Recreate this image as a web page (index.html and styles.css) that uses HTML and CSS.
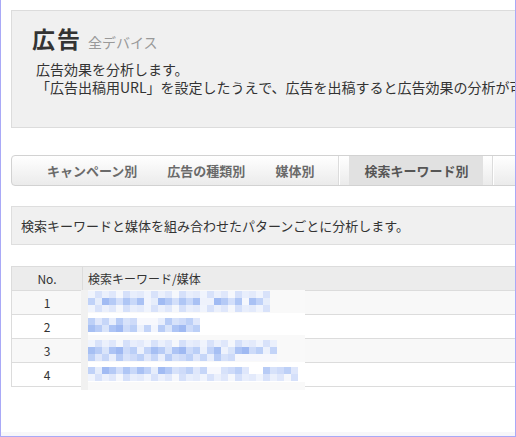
FILE: index.html
```html
<!DOCTYPE html>
<html lang="ja">
<head>
<meta charset="utf-8">
<title>広告</title>
<link rel="stylesheet" href="styles.css">
</head>
<body>
<div class="frame">
  <div class="page">
    <section class="page-head">
      <h1 class="title">広告<span class="sub">全デバイス</span></h1>
      <p class="lead">広告効果を分析します。<br>「広告出稿用URL」を設定したうえで、広告を出稿すると広告効果の分析が可能になります。</p>
    </section>

    <nav class="tabs">
      <a class="tab">キャンペーン別</a>
      <a class="tab">広告の種類別</a>
      <a class="tab">媒体別</a>
      <span class="sep"></span>
      <a class="tab active">検索キーワード別</a>
      <span class="sep"></span>
    </nav>

    <div class="note">検索キーワードと媒体を組み合わせたパターンごとに分析します。</div>

    <div class="table-wrap">
      <table class="report">
        <thead>
          <tr><th class="no">No.</th><th class="kw">検索キーワード/媒体</th></tr>
        </thead>
        <tbody>
          <tr><td class="no">1</td><td></td></tr>
          <tr><td class="no">2</td><td></td></tr>
          <tr><td class="no">3</td><td></td></tr>
          <tr><td class="no">4</td><td></td></tr>
        </tbody>
      </table>
      <svg class="mosaic" width="224" height="100" viewBox="0 0 224 100" aria-hidden="true">
        <defs>
          <pattern id="pb" width="56" height="7" patternUnits="userSpaceOnUse">
            <rect x="0" width="7" height="7" fill="#a9c1f4"/>
            <rect x="7" width="7" height="7" fill="#c0d2f8"/>
            <rect x="14" width="7" height="7" fill="#e6edfb"/>
            <rect x="21" width="7" height="7" fill="#a1bbf3"/>
            <rect x="28" width="7" height="7" fill="#b5caf6"/>
            <rect x="35" width="7" height="7" fill="#d3dffa"/>
            <rect x="42" width="7" height="7" fill="#afc6f5"/>
            <rect x="49" width="7" height="7" fill="#c8d8f9"/>
          </pattern>
          <pattern id="pb2" width="63" height="7" patternUnits="userSpaceOnUse">
            <rect x="0" width="7" height="7" fill="#c3d4f8"/>
            <rect x="7" width="7" height="7" fill="#a6bff3"/>
            <rect x="14" width="7" height="7" fill="#b8ccf6"/>
            <rect x="21" width="7" height="7" fill="#d9e4fa"/>
            <rect x="28" width="7" height="7" fill="#adc4f5"/>
            <rect x="35" width="7" height="7" fill="#9fb9f2"/>
            <rect x="42" width="7" height="7" fill="#cddbf9"/>
            <rect x="49" width="7" height="7" fill="#bbcff7"/>
            <rect x="56" width="7" height="7" fill="#ecf1fc"/>
          </pattern>
          <pattern id="pl" width="56" height="7" patternUnits="userSpaceOnUse">
            <rect x="0" width="7" height="7" fill="#e3eafb"/>
            <rect x="7" width="7" height="7" fill="#f0f4fd"/>
            <rect x="14" width="7" height="7" fill="#d8e2fa"/>
            <rect x="21" width="7" height="7" fill="#ebf0fc"/>
            <rect x="28" width="7" height="7" fill="#dfe7fb"/>
            <rect x="35" width="7" height="7" fill="#f5f7fc"/>
            <rect x="42" width="7" height="7" fill="#d5e0fa"/>
            <rect x="49" width="7" height="7" fill="#e8eefc"/>
          </pattern>
          <pattern id="pm" width="49" height="7" patternUnits="userSpaceOnUse">
            <rect x="0" width="7" height="7" fill="#cedbf9"/>
            <rect x="7" width="7" height="7" fill="#bdd0f7"/>
            <rect x="14" width="7" height="7" fill="#dfe7fb"/>
            <rect x="21" width="7" height="7" fill="#c6d6f8"/>
            <rect x="28" width="7" height="7" fill="#e8eefc"/>
            <rect x="35" width="7" height="7" fill="#b8ccf6"/>
            <rect x="42" width="7" height="7" fill="#d7e2fa"/>
          </pattern>
        </defs>
        <rect width="224" height="100" fill="#f9f9f9"/>
        <rect width="7" height="100" fill="#f1f1f1"/>
        <rect x="7" y="23" width="217" height="22" fill="#ffffff"/>
        <rect x="7" y="72" width="217" height="20" fill="#ffffff"/>

        <!-- row 1 -->
        <rect x="7" y="1" width="182" height="7" fill="url(#pl)"/>
        <rect x="7" y="8" width="182" height="7" fill="url(#pb)"/>
        <rect x="7" y="15" width="182" height="7" fill="url(#pl)"/>
        <rect x="63" y="8" width="7" height="7" fill="#f1f4fd"/>
        <rect x="119" y="8" width="14" height="7" fill="#eef2fc"/>
        <rect x="161" y="8" width="7" height="7" fill="#f5f7fd"/>

        <!-- row 2 -->
        <rect x="7" y="28" width="112" height="7" fill="url(#pm)"/>
        <rect x="7" y="35" width="112" height="7" fill="url(#pb2)"/>
        <rect x="56" y="28" width="21" height="7" fill="#f7f8fd"/>
        <rect x="70" y="35" width="7" height="7" fill="#f2f5fd"/>

        <!-- row 3 -->
        <rect x="7" y="50" width="189" height="7" fill="url(#pl)"/>
        <rect x="7" y="57" width="189" height="7" fill="url(#pb2)"/>
        <rect x="7" y="64" width="189" height="7" fill="url(#pm)"/>
        <rect x="140" y="57" width="7" height="7" fill="#eef2fc"/>
        <rect x="154" y="64" width="42" height="7" fill="#f6f7fc"/>

        <!-- row 4 -->
        <rect x="7" y="77" width="210" height="7" fill="url(#pm)"/>
        <rect x="7" y="84" width="210" height="7" fill="url(#pl)"/>
        <rect x="7" y="77" width="84" height="7" fill="url(#pb)"/>
        <rect x="126" y="77" width="14" height="7" fill="#f7f8fd"/>
        <rect x="168" y="77" width="14" height="7" fill="#ffffff"/>
      </svg>
    </div>
  </div>
  <div class="hscroll"></div>
</div>
</body>
</html>
```

FILE: styles.css
```css
html, body {
  margin: 0;
  padding: 0;
  background: #fff;
}

body {
  font-family: "Noto Sans CJK JP", "Noto Sans", "Liberation Sans", sans-serif;
  color: #333;
}

.frame {
  width: 516px;
  height: 437px;
  box-sizing: border-box;
  border: 1px solid #a9a9f7;
  border-top: 0;
  overflow: hidden;
  display: flex;
  flex-direction: column;
  background: #fff;
}

.page {
  flex: 1;
  min-height: 0;
  width: 800px;
  padding: 10px 0 0 10px;
  overflow: hidden;
}

.hscroll {
  flex: none;
  height: 4px;
  background: #f7f7fa;
}

/* header */
.page-head {
  border: 1px solid #dcdcdc;
  background: #f0f0f0;
  padding: 12px 20px 31px;
}

.title {
  margin: 0;
  height: 30px;
  font-size: 23px;
  font-weight: bold;
  line-height: 30px;
  letter-spacing: 2px;
  color: #333;
}

.sub {
  margin-left: 6px;
  font-size: 14px;
  font-weight: normal;
  line-height: 1;
  letter-spacing: 0;
  color: #999;
}

.lead {
  margin: 7px 0 0 4px;
  font-size: 14px;
  line-height: 18px;
  color: #333;
  white-space: nowrap;
}

/* tabs */
.tabs {
  margin-top: 27px;
  height: 29px;
  display: flex;
  align-items: stretch;
  padding-left: 20px;
  border: 1px solid #d2d2d2;
  border-radius: 4px;
  background: linear-gradient(#ffffff, #ebebeb);
}

.tab {
  padding: 0 15px;
  font-size: 13px;
  font-weight: bold;
  line-height: 29px;
  color: #6a6a6a;
  white-space: nowrap;
}

.tab.active {
  background: #e1e1e1;
  color: #555;
}

.sep {
  width: 1px;
  margin: 0 9px;
  background: #dcdcdc;
  border-right: 1px solid #fff;
}

/* note */
.note {
  margin-top: 20px;
  border: 1px solid #dedede;
  border-right: 0;
  background: #f0f0f0;
  padding: 0 9px;
  font-size: 13px;
  line-height: 37px;
  color: #333;
}

/* table */
.table-wrap {
  position: relative;
  margin-top: 21px;
}

.report {
  width: 760px;
  border-collapse: collapse;
  border: 1px solid #dcdcdc;
  font-size: 12px;
  color: #333;
}

.report th,
.report td {
  height: 23px;
  padding: 0 5px;
  line-height: 23px;
  border-bottom: 1px solid #dcdcdc;
  text-align: left;
  font-weight: normal;
}

.report th {
  background: #ececec;
}

.report .no {
  width: 60px;
  text-align: center;
  border-right: 1px solid #dcdcdc;
}

.report tbody tr:nth-child(odd) td {
  background: #f8f8f8;
}

.report tbody tr:nth-child(even) td {
  background: #fff;
}

.mosaic {
  position: absolute;
  left: 70px;
  top: 24px;
  display: block;
}
```
